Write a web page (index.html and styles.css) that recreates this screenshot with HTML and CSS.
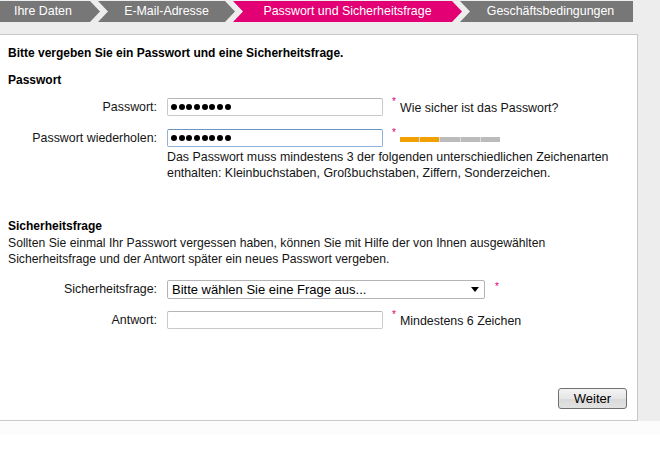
FILE: index.html
```html
<!DOCTYPE html>
<html lang="de">
<head>
<meta charset="utf-8">
<title>Passwort und Sicherheitsfrage</title>
<link rel="stylesheet" href="styles.css">
</head>
<body>
<div class="top">
  <nav class="tabs">
    <div class="tab tab-first">Ihre Daten</div>
    <div class="tab tab-mid tab-2">E-Mail-Adresse</div>
    <div class="tab tab-mid tab-3 active">Passwort und Sicherheitsfrage</div>
    <div class="tab tab-last tab-4">Geschäftsbedingungen</div>
  </nav>
  <div class="panel">
    <p class="title">Bitte vergeben Sie ein Passwort und eine Sicherheitsfrage.</p>
    <h2 class="section">Passwort</h2>
    <div class="row row-pw1">
      <label class="label">Passwort:</label>
      <div class="input pw"><span></span><span></span><span></span><span></span><span></span><span></span><span></span><span></span></div>
      <span class="req">*</span>
      <span class="aside">Wie sicher ist das Passwort?</span>
    </div>
    <div class="row row-pw2">
      <label class="label">Passwort wiederholen:</label>
      <div class="input pw focus"><span></span><span></span><span></span><span></span><span></span><span></span><span></span><span></span></div>
      <span class="req">*</span>
      <div class="meter"><i class="on"></i><i class="on"></i><i></i><i></i><i></i></div>
    </div>
    <p class="help">Das Passwort muss mindestens 3 der folgenden unterschiedlichen Zeichenarten<br>enthalten: Kleinbuchstaben, Großbuchstaben, Ziffern, Sonderzeichen.</p>
    <h2 class="section section-2">Sicherheitsfrage</h2>
    <p class="para">Sollten Sie einmal Ihr Passwort vergessen haben, können Sie mit Hilfe der von Ihnen ausgewählten<br>Sicherheitsfrage und der Antwort später ein neues Passwort vergeben.</p>
    <div class="row row-q">
      <label class="label">Sicherheitsfrage:</label>
      <div class="select"><span>Bitte wählen Sie eine Frage aus...</span><b class="arrow"></b></div>
      <span class="req">*</span>
    </div>
    <div class="row row-a">
      <label class="label">Antwort:</label>
      <div class="input"></div>
      <span class="req">*</span>
      <span class="aside">Mindestens 6 Zeichen</span>
    </div>
    <button class="btn" type="button">Weiter</button>
  </div>
</div>
<div class="foot"></div>
</body>
</html>
```
FILE: styles.css
```css
html, body {
  margin: 0;
  padding: 0;
  background: #ffffff;
  font-family: "Liberation Sans", Arial, sans-serif;
  font-size: 12.4px;
  color: #151515;
}
.top {
  background: #ededed;
  padding-top: 1px;
  width: 660px;
}
.tabs {
  display: flex;
  height: 21px;
}
.tab {
  height: 21px;
  line-height: 21px;
  background: #777777;
  color: #ffffff;
  font-size: 12.4px;
  text-align: center;
  box-sizing: border-box;
  white-space: nowrap;
}
.tab-first {
  width: 100px;
  text-align: left;
  padding-left: 14px;
  clip-path: polygon(0 0, calc(100% - 10px) 0, 100% 50%, calc(100% - 10px) 100%, 0 100%);
}
.tab-mid {
  margin-left: -2px;
  clip-path: polygon(0 0, calc(100% - 10px) 0, 100% 50%, calc(100% - 10px) 100%, 0 100%, 10px 50%);
}
.tab-2 { width: 137px; }
.tab-3 { width: 229px; }
.tab-last {
  margin-left: -2px;
  width: 173px;
  padding-left: 8px;
  clip-path: polygon(0 0, 100% 0, 100% 100%, 0 100%, 10px 50%);
}
.tab.active {
  background: #e20074;
}
.panel {
  margin-top: 12px;
  width: 638px;
  height: 387px;
  box-sizing: border-box;
  background: #ffffff;
  border: 1px solid #c8c8c8;
  border-left: none;
  padding: 11px 10px 11px 8px;
  display: flex;
  flex-direction: column;
}
.title {
  margin: 0;
  font-size: 12px;
  font-weight: bold;
  line-height: 14px;
  color: #000;
}
.section {
  margin: 13px 0 0;
  font-size: 12px;
  font-weight: bold;
  line-height: 14px;
  color: #000;
}
.section-2 { margin-top: 38px; }
.row {
  display: flex;
  align-items: center;
  height: 18px;
}
.row-pw1 { margin-top: 11px; }
.row-pw2 { margin-top: 13px; }
.row-q { margin-top: 13px; }
.row-a { margin-top: 13px; }
.label {
  width: 149px;
  padding-right: 10px;
  text-align: right;
  flex: none;
  white-space: nowrap;
}
.input {
  width: 216px;
  height: 18px;
  box-sizing: border-box;
  border: 1px solid #c9c9c9;
  border-top-color: #b5b5b5;
  border-radius: 2px;
  background: #fff;
  flex: none;
  display: flex;
  align-items: center;
  padding-left: 3px;
  gap: 1.7px;
}
.input.focus {
  border-color: #8fb2d8;
  border-top-color: #6a93c2;
}
.pw span {
  width: 6px;
  height: 6px;
  border-radius: 50%;
  background: #000;
  display: block;
}
.req {
  align-self: flex-start;
  color: #e20074;
  font-size: 10px;
  line-height: 8px;
  margin: 0 3px 0 9px;
  width: 5px;
}
.aside {
  line-height: 14px;
  margin-top: 2px;
}
.meter {
  display: flex;
  margin-top: 2px;
  width: 100px;
  height: 5px;
  gap: 1px;
  background: #dcdcdc;
}
.meter i {
  flex: 1;
  background: #bbbbbb;
}
.meter i.on {
  background: #f0a000;
}
.help {
  margin: 2px 0 0 159px;
  line-height: 16px;
}
.para {
  margin: 2px 0 0;
  line-height: 16px;
  font-size: 12.2px;
}
.select {
  width: 318px;
  height: 19px;
  box-sizing: border-box;
  border: 1px solid #b4b4b4;
  border-radius: 2px;
  background: #fff;
  display: flex;
  align-items: center;
  justify-content: space-between;
  padding: 0 5px 0 4px;
  font-size: 13px;
  color: #000;
  flex: none;
}
.arrow {
  width: 0;
  height: 0;
  border-left: 4px solid transparent;
  border-right: 4px solid transparent;
  border-top: 5px solid #000;
}
.row-q .req { margin-left: 10px; margin-top: 3px; }
.btn {
  margin-top: auto;
  align-self: flex-end;
  width: 69px;
  height: 21px;
  border: 1px solid #707070;
  border-radius: 3px;
  background: linear-gradient(#f3f3f3, #e6e6e6 50%, #d9d9d9 51%, #e2e2e2);
  font-family: "Liberation Sans", Arial, sans-serif;
  font-size: 13px;
  color: #000;
  padding: 0;
  line-height: 19px;
}
.foot {
  height: 13px;
  background: #fcfcfc;
}
```
